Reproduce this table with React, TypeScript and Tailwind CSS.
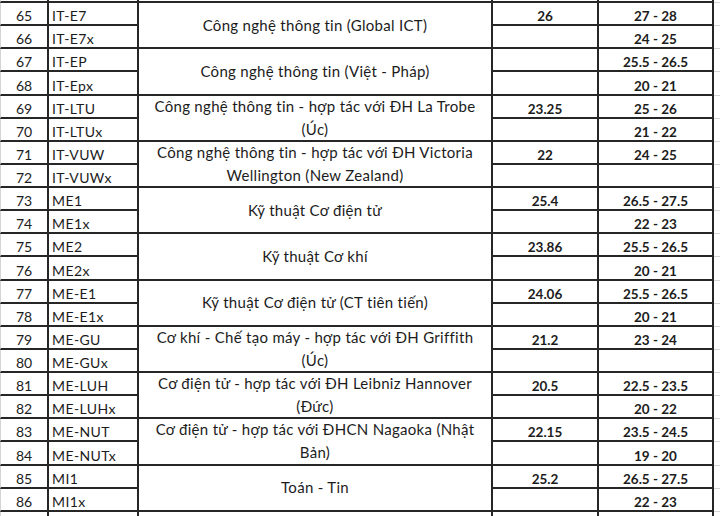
import React from "react";

type Row = { n: number; code: string; d: string; e: string };
type Group = { lines: string[]; rows: [Row, Row] };

const groups: Group[] = [
  { lines: ["Công nghệ thông tin (Global ICT)"], rows: [{ n: 65, code: "IT-E7", d: "26", e: "27 - 28" }, { n: 66, code: "IT-E7x", d: "", e: "24 - 25" }] },
  { lines: ["Công nghệ thông tin (Việt - Pháp)"], rows: [{ n: 67, code: "IT-EP", d: "", e: "25.5 - 26.5" }, { n: 68, code: "IT-Epx", d: "", e: "20 - 21" }] },
  { lines: ["Công nghệ thông tin - hợp tác với ĐH La Trobe", "(Úc)"], rows: [{ n: 69, code: "IT-LTU", d: "23.25", e: "25 - 26" }, { n: 70, code: "IT-LTUx", d: "", e: "21 - 22" }] },
  { lines: ["Công nghệ thông tin - hợp tác với ĐH Victoria", "Wellington (New Zealand)"], rows: [{ n: 71, code: "IT-VUW", d: "22", e: "24 - 25" }, { n: 72, code: "IT-VUWx", d: "", e: "" }] },
  { lines: ["Kỹ thuật Cơ điện tử"], rows: [{ n: 73, code: "ME1", d: "25.4", e: "26.5 - 27.5" }, { n: 74, code: "ME1x", d: "", e: "22 - 23" }] },
  { lines: ["Kỹ thuật Cơ khí"], rows: [{ n: 75, code: "ME2", d: "23.86", e: "25.5 - 26.5" }, { n: 76, code: "ME2x", d: "", e: "20 - 21" }] },
  { lines: ["Kỹ thuật Cơ điện tử (CT tiên tiến)"], rows: [{ n: 77, code: "ME-E1", d: "24.06", e: "25.5 - 26.5" }, { n: 78, code: "ME-E1x", d: "", e: "20 - 21" }] },
  { lines: ["Cơ khí - Chế tạo máy - hợp tác với ĐH Griffith", "(Úc)"], rows: [{ n: 79, code: "ME-GU", d: "21.2", e: "23 - 24" }, { n: 80, code: "ME-GUx", d: "", e: "" }] },
  { lines: ["Cơ điện tử - hợp tác với ĐH Leibniz Hannover", "(Đức)"], rows: [{ n: 81, code: "ME-LUH", d: "20.5", e: "22.5 - 23.5" }, { n: 82, code: "ME-LUHx", d: "", e: "20 - 22" }] },
  { lines: ["Cơ điện tử - hợp tác với ĐHCN Nagaoka (Nhật", "Bản)"], rows: [{ n: 83, code: "ME-NUT", d: "22.15", e: "23.5 - 24.5" }, { n: 84, code: "ME-NUTx", d: "", e: "19 - 20" }] },
  { lines: ["Toán - Tin"], rows: [{ n: 85, code: "MI1", d: "25.2", e: "26.5 - 27.5" }, { n: 86, code: "MI1x", d: "", e: "22 - 23" }] },
];

const cellA = "flex items-end justify-center border-l border-l-[#d4d4d4] border-r-2 border-b-2 border-[#262626] text-[14px] leading-[16px]";
const cellB = "flex items-end pl-[3px] border-r-2 border-b-2 border-[#262626] text-[14px] tracking-[0.4px] leading-[16px] whitespace-nowrap";
const cellC = "row-span-2 flex flex-col items-center justify-center border-r-2 border-b-2 border-[#262626] text-[15px] tracking-[0.3px] leading-[23px] whitespace-nowrap";
const cellNum = "flex items-end justify-center border-r-2 border-b-2 border-[#262626] text-[13.5px] leading-[16px] font-bold";
const cellF = "border-b border-[#d4d4d4]";

function Sliver({ bottom }: { bottom: boolean }) {
  const b = bottom ? "" : " border-b-2";
  return (
    <>
      <div className={"border-l border-l-[#d4d4d4] border-r-2 border-[#262626]" + b}></div>
      <div className={"border-r-2 border-[#262626]" + b}></div>
      <div className={"border-r-2 border-[#262626]" + b}></div>
      <div className={"border-r-2 border-[#262626]" + b}></div>
      <div className={"border-r-2 border-[#262626]" + b}></div>
      <div className={bottom ? "" : "border-b border-[#d4d4d4]"}></div>
    </>
  );
}

export default function App() {
  return (
    <div
      className="w-[720px] h-[516px] overflow-hidden bg-white text-[#1c1c1c] grid grid-cols-[49px_90px_354px_106px_115px_1fr] grid-rows-[3px_repeat(22,23.14px)_1fr]"
      style={{ fontFamily: "Lato, 'Liberation Sans', sans-serif" }}
    >
      <Sliver bottom={false} />
      {groups.map((g) => (
        <React.Fragment key={g.rows[0].n}>
          <div className={cellA}>{g.rows[0].n}</div>
          <div className={cellB}>{g.rows[0].code}</div>
          <div className={cellC}>
            {g.lines.map((l) => (
              <div key={l}>{l}</div>
            ))}
          </div>
          <div className={cellNum}>{g.rows[0].d}</div>
          <div className={cellNum}>{g.rows[0].e}</div>
          <div className={cellF}></div>
          <div className={cellA}>{g.rows[1].n}</div>
          <div className={cellB}>{g.rows[1].code}</div>
          <div className={cellNum}>{g.rows[1].d}</div>
          <div className={cellNum}>{g.rows[1].e}</div>
          <div className={cellF}></div>
        </React.Fragment>
      ))}
      <Sliver bottom={true} />
    </div>
  );
}
